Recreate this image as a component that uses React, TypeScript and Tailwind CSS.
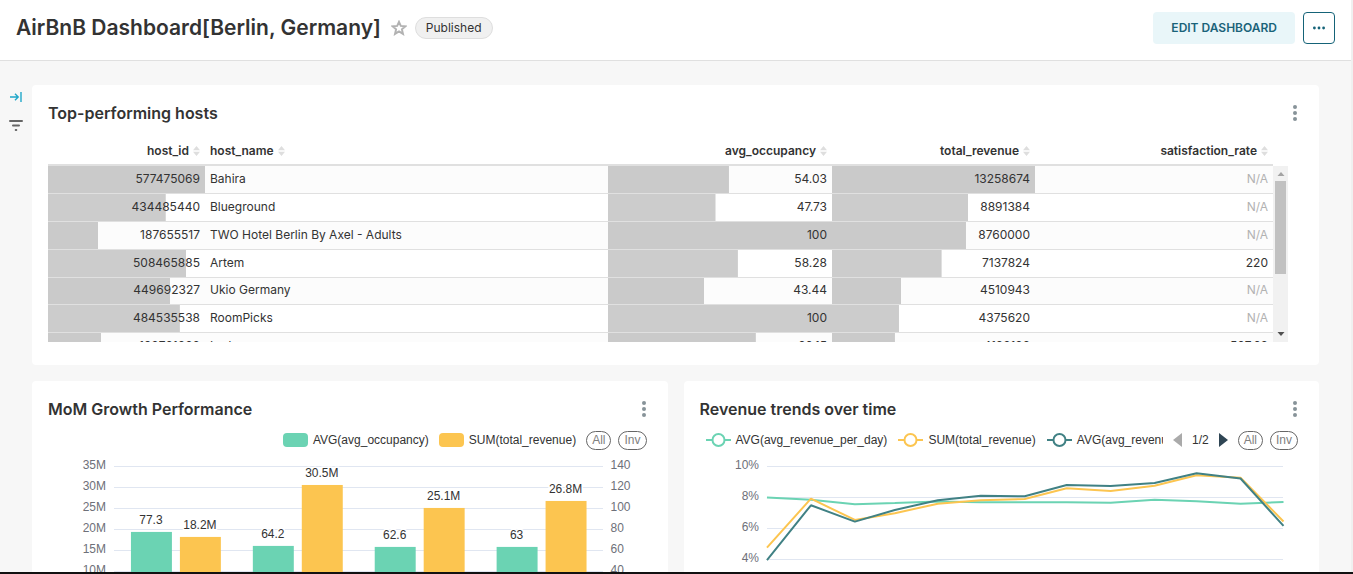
import React from 'react';

type Host = {
  id: string;
  idPct: number;
  name: string;
  occupancy: string;
  occupancyPct: number;
  revenue: string;
  revenuePct: number;
  satisfaction: string | null;
};

const hosts: Host[] = [
  { id: '577475069', idPct: 100, name: 'Bahira', occupancy: '54.03', occupancyPct: 54, revenue: '13258674', revenuePct: 100, satisfaction: null },
  { id: '434485440', idPct: 75, name: 'Blueground', occupancy: '47.73', occupancyPct: 48, revenue: '8891384', revenuePct: 67, satisfaction: null },
  { id: '187655517', idPct: 32, name: 'TWO Hotel Berlin By Axel - Adults', occupancy: '100', occupancyPct: 100, revenue: '8760000', revenuePct: 66, satisfaction: null },
  { id: '508465885', idPct: 88, name: 'Artem', occupancy: '58.28', occupancyPct: 58, revenue: '7137824', revenuePct: 54, satisfaction: '220' },
  { id: '449692327', idPct: 78, name: 'Ukio Germany', occupancy: '43.44', occupancyPct: 43, revenue: '4510943', revenuePct: 34, satisfaction: null },
  { id: '484535538', idPct: 84, name: 'RoomPicks', occupancy: '100', occupancyPct: 100, revenue: '4375620', revenuePct: 33, satisfaction: null },
  { id: '198781888', idPct: 34, name: 'Luda', occupancy: '66.15', occupancyPct: 66, revenue: '4122122', revenuePct: 31, satisfaction: '507.63' },
];

const bar = (pct: number): React.CSSProperties => ({ backgroundSize: `${pct}% 100%` });

const barCell =
  'border-b border-[#e0e0e0] bg-[linear-gradient(rgba(0,0,0,0.2),rgba(0,0,0,0.2))] bg-no-repeat bg-clip-padding bg-origin-padding px-[5px] pb-[2px] text-right';
const plainCell = 'border-b border-[#e0e0e0] px-[5px] pb-[2px]';

function SortIcon() {
  return (
    <svg width="7" height="10" viewBox="0 0 7 10" className="shrink-0" aria-hidden="true">
      <path d="M0 4.2 3.5 0 7 4.2zM0 5.8 3.5 10 7 5.8z" fill="#dedede" />
    </svg>
  );
}

function HeaderCell({ label, left }: { label: string; left?: boolean }) {
  return (
    <th className="h-[30px] border-b-2 border-[#e0e0e0] px-[5px] pt-[2px] font-semibold">
      <button type="button" className={left ? 'flex w-full items-center gap-1' : 'flex w-full items-center justify-end gap-1'}>
        {label}
        <SortIcon />
      </button>
    </th>
  );
}

function Kebab() {
  return (
    <button type="button" aria-label="More options" className="flex h-6 w-4 items-center justify-center">
      <svg width="4" height="16" viewBox="0 0 4 16" fill="#879399">
        <circle cx="2" cy="2" r="2" />
        <circle cx="2" cy="8" r="2" />
        <circle cx="2" cy="14" r="2" />
      </svg>
    </button>
  );
}

function Card({ title, className, children }: { title: string; className: string; children: React.ReactNode }) {
  return (
    <section className={`rounded bg-white px-4 pt-4 ${className}`}>
      <div className="flex h-6 items-center justify-between">
        <h2 className="text-base font-semibold">{title}</h2>
        <Kebab />
      </div>
      {children}
    </section>
  );
}

function HostsTable() {
  return (
    <div className="mt-[11px] flex h-[206px] overflow-hidden pr-[15px] text-xs">
      <div className="min-w-0 flex-1">
        <table className="w-full table-fixed border-separate border-spacing-0">
          <colgroup>
            <col className="w-[157px]" />
            <col className="w-[403px]" />
            <col className="w-[224px]" />
            <col className="w-[203px]" />
            <col className="w-[238px]" />
          </colgroup>
          <thead>
            <tr>
              <HeaderCell label="host_id" />
              <HeaderCell label="host_name" left />
              <HeaderCell label="avg_occupancy" />
              <HeaderCell label="total_revenue" />
              <HeaderCell label="satisfaction_rate" />
            </tr>
          </thead>
          <tbody>
            {hosts.map((h) => (
              <tr key={h.id} className="h-7 odd:bg-[#fcfcfc] nth-[5n]:h-[27px]">
                <td className={barCell} style={bar(h.idPct)}>{h.id}</td>
                <td className={plainCell}>{h.name}</td>
                <td className={barCell} style={bar(h.occupancyPct)}>{h.occupancy}</td>
                <td className={barCell} style={bar(h.revenuePct)}>{h.revenue}</td>
                <td className={`${plainCell} text-right`}>
                  {h.satisfaction ?? <span className="text-[#b2b2b2]">N/A</span>}
                </td>
              </tr>
            ))}
          </tbody>
        </table>
      </div>
      <div className="mt-[30px] flex w-[15px] flex-col items-center justify-between bg-[#f1f1f1] pb-[6px]">
        <div className="flex flex-col items-center">
          <svg width="8" height="15" viewBox="0 0 8 15" aria-hidden="true"><path d="M0.5 10 4 6 7.5 10z" fill="#a3a3a3" /></svg>
          <div className="h-[93px] w-[11px] bg-[#c1c1c1]" />
        </div>
        <svg width="8" height="4" viewBox="0 0 8 4" aria-hidden="true"><path d="M0.5 0 4 4 7.5 0z" fill="#505050" /></svg>
      </div>
    </div>
  );
}

function Selectors() {
  const pill = 'h-[19px] rounded-full border border-[#666] px-[5px] text-xs leading-4 text-[#808080]';
  return (
    <div className="flex shrink-0 gap-[7px]">
      <button type="button" className={pill}>All</button>
      <button type="button" className={pill}>Inv</button>
    </div>
  );
}

const chartFont = "font-['Liberation_Sans',Arial,sans-serif]";

const groups = [
  { x: 83, y1: 79, l1: '77.3', y2: 84, l2: '18.2M' },
  { x: 205, y1: 93, l1: '64.2', y2: 32, l2: '30.5M' },
  { x: 327, y1: 94, l1: '62.6', y2: 55, l2: '25.1M' },
  { x: 449, y1: 94, l1: '63', y2: 48, l2: '26.8M' },
];

function GrowthChart() {
  const left = ['35M', '30M', '25M', '20M', '15M', '10M', '5M', '0'];
  const right = ['140', '120', '100', '80', '60', '40', '20', '0'];
  return (
    <div className={chartFont}>
      <div className="mt-[9px] flex h-5 items-center justify-end gap-[10px] pr-[5px] text-xs text-[#333]">
        <span className="flex items-center gap-[5px]">
          <i className="h-[14px] w-[25px] rounded bg-[#6bd3b3]" />
          AVG(avg_occupancy)
        </span>
        <span className="flex items-center gap-[5px]">
          <i className="h-[14px] w-[25px] rounded bg-[#fcc550]" />
          SUM(total_revenue)
        </span>
        <Selectors />
      </div>
      <svg viewBox="0 0 604 190" className="mt-[3px] block w-full text-xs" role="img" aria-label="MoM Growth Performance">
        {left.map((t, i) => (
          <g key={t} fill="#6e7079">
            <path d={`M66 ${13.5 + 21 * i}H555`} stroke="#e0e6f1" shapeRendering="crispEdges" />
            <text x="58" y={16 + 21 * i} textAnchor="end">{t}</text>
            <text x="563" y={16 + 21 * i}>{right[i]}</text>
          </g>
        ))}
        {groups.map((g) => (
          <g key={g.x} fill="#333" textAnchor="middle">
            <rect x={g.x} y={g.y1} width="41" height={161 - g.y1} fill="#6bd3b3" />
            <rect x={g.x + 49} y={g.y2} width="41" height={161 - g.y2} fill="#fcc550" />
            <g stroke="#fff" strokeWidth="3" paintOrder="stroke">
              <text x={g.x + 20} y={g.y1 - 8}>{g.l1}</text>
              <text x={g.x + 69} y={g.y2 - 8}>{g.l2}</text>
            </g>
          </g>
        ))}
      </svg>
    </div>
  );
}

const xs = [67, 111, 155, 195, 238, 281, 325, 367, 411, 455, 497, 541, 584];
const series = [
  { color: '#6bd3b3', ys: [44.5, 46.7, 51.3, 50, 48.5, 49.3, 49.3, 49.3, 49.7, 46.7, 48.3, 50.7, 49] },
  { color: '#fcc550', ys: [94.7, 45.7, 67, 60.3, 50.7, 47.3, 46, 35.3, 38, 32.7, 22.3, 24.7, 68.5] },
  { color: '#408184', ys: [107.3, 52.3, 68.7, 57, 47.3, 42.7, 43.3, 32, 33, 30, 20.3, 25.5, 73] },
];

function LineKey({ color, label }: { color: string; label: string }) {
  return (
    <span className="flex shrink-0 items-center gap-[5px]">
      <svg width="25" height="14" viewBox="0 0 25 14" aria-hidden="true">
        <path d="M0 7H25" stroke={color} strokeWidth="2" />
        <circle cx="12.5" cy="7" r="6" fill="#fff" stroke={color} strokeWidth="2" />
      </svg>
      {label}
    </span>
  );
}

function RevenueChart() {
  return (
    <div className={chartFont}>
      <div className="mt-[9px] flex h-5 items-center gap-[10px] pl-[6px] pr-[5px] text-xs text-[#333]">
        <div className="flex min-w-0 flex-1 gap-[11px] overflow-hidden whitespace-nowrap">
          <LineKey color="#6bd3b3" label="AVG(avg_revenue_per_day)" />
          <LineKey color="#fcc550" label="SUM(total_revenue)" />
          <LineKey color="#408184" label="AVG(avg_revenue)" />
        </div>
        <div className="flex shrink-0 items-center gap-[10px]">
          <button type="button" aria-label="Previous">
            <svg width="9" height="14" viewBox="0 0 9 14" className="block"><path d="M9 0V14L0 7z" fill="#aaa" /></svg>
          </button>
          1/2
          <button type="button" aria-label="Next">
            <svg width="9" height="14" viewBox="0 0 9 14" className="block"><path d="M0 0V14L9 7z" fill="#2f4554" /></svg>
          </button>
        </div>
        <Selectors />
      </div>
      <svg viewBox="0 0 604 190" className="mt-[3px] block w-full text-xs" role="img" aria-label="Revenue trends over time">
        {['10%', '8%', '6%', '4%', '2%', '0%'].map((t, i) => (
          <g key={t}>
            <path d={`M67 ${13.5 + 31 * i}H584`} stroke="#e0e6f1" shapeRendering="crispEdges" />
            <text x="59" y={16 + 31 * i} textAnchor="end" fill="#6e7079">{t}</text>
          </g>
        ))}
        {series.map((s) => (
          <polyline
            key={s.color}
            points={s.ys.map((y, i) => `${xs[i]},${y}`).join(' ')}
            fill="none"
            stroke={s.color}
            strokeWidth="2"
            strokeLinejoin="bevel"
          />
        ))}
      </svg>
    </div>
  );
}

export default function App() {
  return (
    <div className="flex h-screen flex-col overflow-hidden border-b-2 border-[#111] bg-[#f0f0f0] font-['Inter',sans-serif] text-[#333]">
      <div className="mr-[2px] flex min-h-0 flex-1 flex-col bg-[#f7f7f7]">
        <header className="flex shrink-0 items-center justify-between border-b border-[#e0e0e0] bg-white px-4 pt-3 pb-4">
          <div className="flex items-center">
            <h1 className="text-[21px] leading-8 font-semibold">AirBnB Dashboard[Berlin, Germany]</h1>
            <button type="button" aria-label="Favorite" className="ml-[10px]">
              <svg width="16" height="16" viewBox="0 0 16 16" fill="none" stroke="#b2b2b2" strokeWidth="1.9" strokeLinejoin="miter" className="block">
                <path d="M8 1.8 9.8 5.9 14.4 6.3 10.9 9.3 12 13.9 8 11.4 4 13.9 5.1 9.3 1.6 6.3 6.2 5.9z" />
              </svg>
            </button>
            <span className="ml-2 rounded-full border border-[#dedede] bg-[#f0f0f0] px-[10px] text-xs leading-5">Published</span>
          </div>
          <div className="flex gap-2">
            <button type="button" className="h-8 rounded bg-[#e9f6f9] px-[18px] text-xs font-semibold text-[#1a6379]">EDIT DASHBOARD</button>
            <button type="button" aria-label="More" className="flex h-8 w-8 items-center justify-center rounded border border-[#156378]">
              <svg width="12" height="4" viewBox="0 0 12 4" fill="#156378">
                <circle cx="1.4" cy="2" r="1.4" />
                <circle cx="6" cy="2" r="1.4" />
                <circle cx="10.6" cy="2" r="1.4" />
              </svg>
            </button>
          </div>
        </header>
        <div className="flex min-h-0 flex-1">
          <aside className="flex w-8 shrink-0 flex-col items-center gap-4 pt-[30px]">
            <button type="button" aria-label="Expand filters">
              <svg width="12" height="12" viewBox="0 0 12 12" fill="none" stroke="#20a7c9" strokeWidth="1.4" className="block">
                <path d="M0 6H8.2M5 2.8 8.2 6 5 9.2M11 1V11" />
              </svg>
            </button>
            <button type="button" aria-label="Filters">
              <svg width="14" height="14" viewBox="0 0 14 14" stroke="#666" strokeWidth="2" strokeLinecap="round" className="block">
                <path d="M1 2H13M4 6.5H10M6.7 11H7.3" />
              </svg>
            </button>
          </aside>
          <main className="grid min-w-0 flex-1 content-start grid-cols-2 gap-4 pt-6 pr-8">
            <Card title="Top-performing hosts" className="col-span-2 pb-[23px]">
              <HostsTable />
            </Card>
            <Card title="MoM Growth Performance" className="pb-4">
              <GrowthChart />
            </Card>
            <Card title="Revenue trends over time" className="pb-4">
              <RevenueChart />
            </Card>
          </main>
        </div>
      </div>
    </div>
  );
}
